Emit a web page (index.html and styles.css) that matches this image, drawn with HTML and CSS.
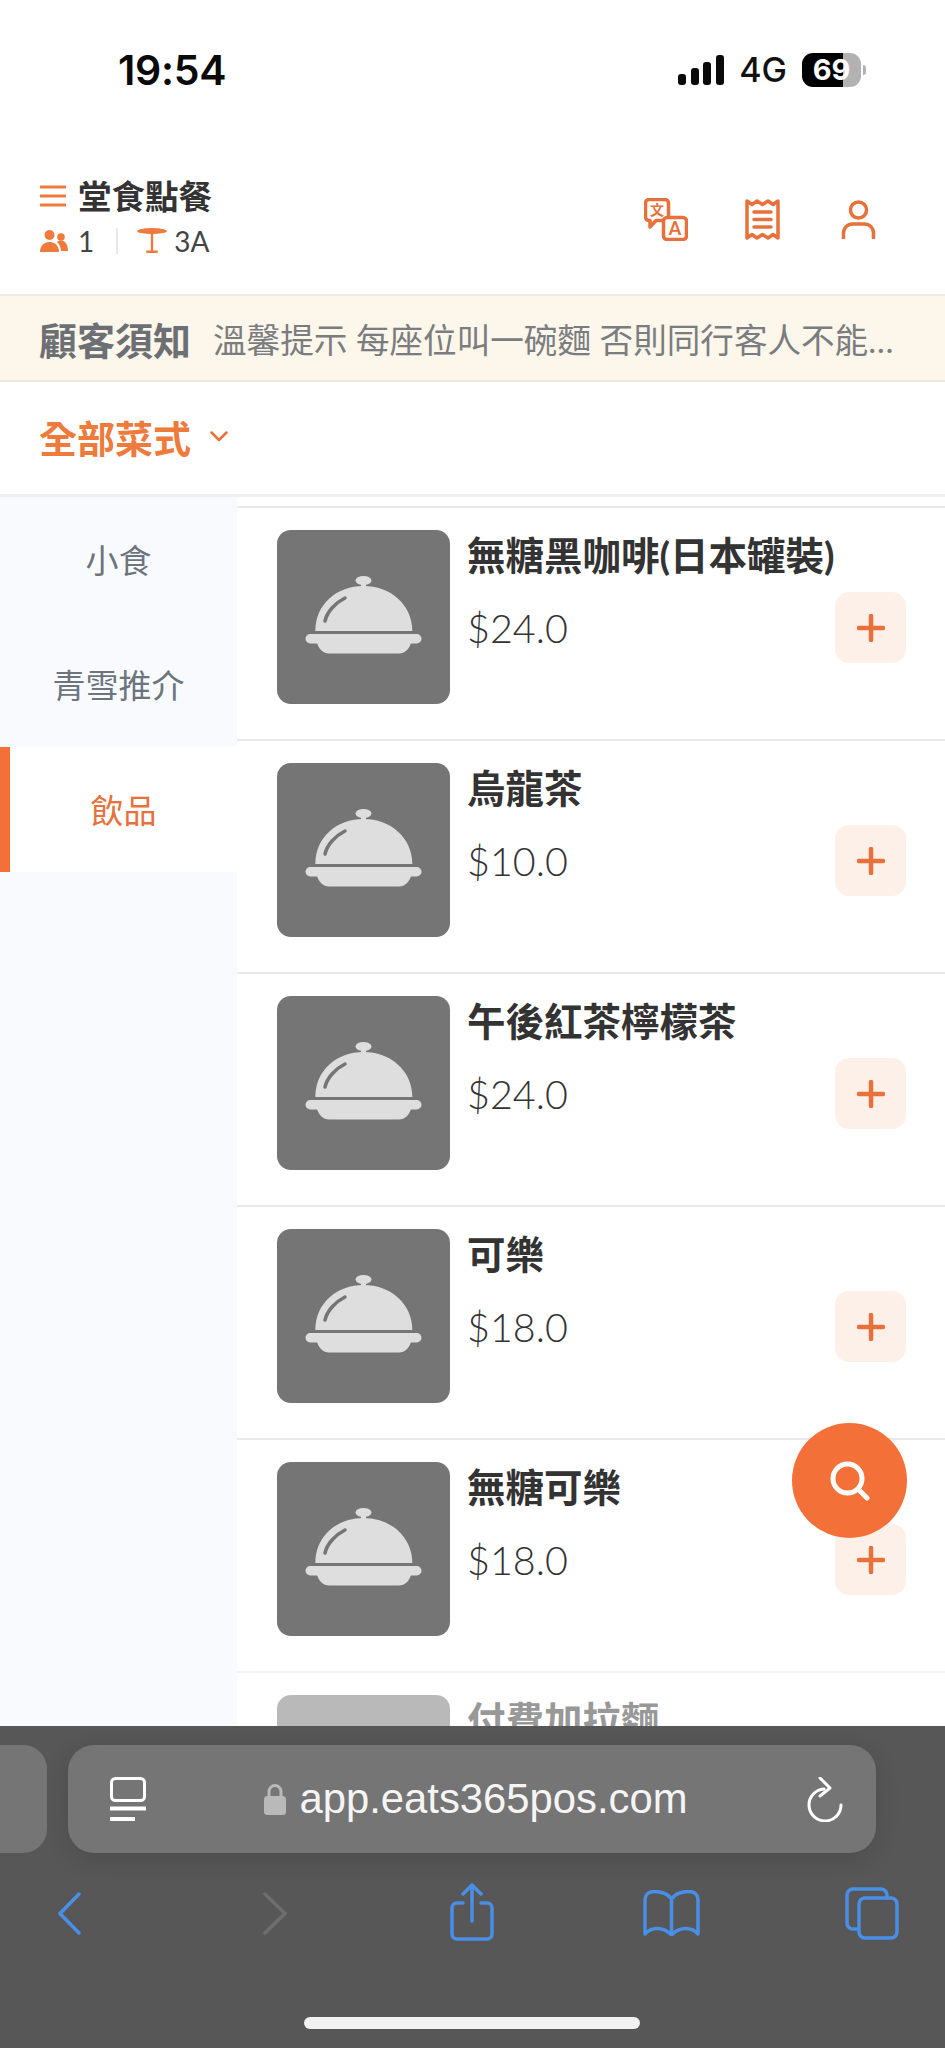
FILE: index.html
```html
<!DOCTYPE html>
<html lang="zh-Hant">
<head>
<meta charset="utf-8">
<title>堂食點餐</title>
<link rel="stylesheet" href="styles.css">
</head>
<body>
<div class="phone">
  <div class="status">
    <span class="time">19:54</span>
    <div class="status-right">
      <svg class="signal" width="46" height="30" viewBox="0 0 46 30"><rect x="0" y="19" width="8" height="11" rx="3"/><rect x="13" y="13" width="8" height="17" rx="3"/><rect x="25" y="7" width="8" height="23" rx="3"/><rect x="38" y="0" width="8" height="30" rx="3"/></svg>
      <span class="net">4G</span>
      <div class="battery">69</div>
      <span class="battery-tip"></span>
    </div>
  </div>

  <header class="head">
    <div class="head-left">
      <div class="title-row">
        <svg class="burger" width="26" height="22" viewBox="0 0 26 22"><path d="M1 2h24M1 11h24M1 20h24"/></svg>
        <span class="title">堂食點餐</span>
      </div>
      <div class="meta-row">
        <svg class="ico-people" width="28" height="22" viewBox="0 0 28 22"><circle cx="9.500" cy="5" r="5"/><circle cx="21" cy="7" r="3.800"/><path d="M0 22c0-6 4-10 9.500-10S19 16 19 22z"/><path d="M17 12c1-1 2.500-1.500 4-1.500 4 0 7 4 7 9.500v1h-7c0-3-1.500-7-4-9z"/></svg>
        <span class="meta-num">1</span>
        <span class="meta-div"></span>
        <svg class="ico-table" width="30" height="26" viewBox="0 0 30 26"><ellipse cx="15" cy="3" rx="15" ry="3"/><rect x="13.800" y="5" width="2.400" height="18"/><rect x="9" y="22.500" width="12" height="2.600" rx="1.300"/></svg>
        <span class="meta-num">3A</span>
      </div>
    </div>
    <div class="head-icons">
      <svg class="ico-line ico-translate" width="44" height="43" viewBox="0 0 44 43"><path d="M5 1.500h16a3.500 3.500 0 0 1 3.500 3.500v14a3.500 3.500 0 0 1-3.500 3.500H12L6 29v-6.500H5A3.500 3.500 0 0 1 1.500 19V5A3.500 3.500 0 0 1 5 1.500z"/><rect class="fill-white" x="19.500" y="19.500" width="23" height="22" rx="3.500"/><text class="ico-zh" x="13" y="17">文</text><text class="ico-a" x="31" y="37">A</text></svg>
      <svg class="ico-line ico-receipt" width="35" height="41" viewBox="0 0 35 41"><path d="M2 2l5 3.500 5-3.500 5.500 3.500L23 2l5 3.500L33 2v37l-5-3.500-5 3.500-5.500-3.500L12 39l-5-3.500L2 39z"/><path d="M9 13h17M9 20.500h17M9 28h17"/></svg>
      <svg class="ico-line ico-person" width="35" height="39" viewBox="0 0 35 39"><circle cx="17.500" cy="10" r="8"/><path d="M2.500 38v-5a9 9 0 0 1 9-9h12a9 9 0 0 1 9 9v5"/></svg>
    </div>
  </header>

  <div class="notice">
    <span class="notice-label">顧客須知</span>
    <span class="notice-text">溫馨提示 每座位叫一碗麵 否則同行客人不能共享食物，敬請見諒</span>
  </div>

  <div class="category">
    <span class="category-name">全部菜式</span>
    <svg class="chev" width="18" height="11" viewBox="0 0 18 11"><path d="M1.500 1.500L9 9l7.500-7.500"/></svg>
  </div>

  <main class="body">
    <nav class="side">
      <div class="side-item">小食</div>
      <div class="side-item">青雪推介</div>
      <div class="side-item is-active">飲品</div>
    </nav>
    <section class="list">
      <article class="row">
        <div class="thumb"><svg class="dish" viewBox="0 0 173 174"><use href="#dish"/></svg></div>
        <div class="info"><h3 class="name">無糖黑咖啡(日本罐裝)</h3><div class="line"><span class="price">$24.0</span><button class="add"><svg width="28" height="28" viewBox="0 0 28 28"><path d="M14 2v24M2 14h24"/></svg></button></div></div>
      </article>
      <article class="row">
        <div class="thumb"><svg class="dish" viewBox="0 0 173 174"><use href="#dish"/></svg></div>
        <div class="info"><h3 class="name">烏龍茶</h3><div class="line"><span class="price">$10.0</span><button class="add"><svg width="28" height="28" viewBox="0 0 28 28"><path d="M14 2v24M2 14h24"/></svg></button></div></div>
      </article>
      <article class="row">
        <div class="thumb"><svg class="dish" viewBox="0 0 173 174"><use href="#dish"/></svg></div>
        <div class="info"><h3 class="name">午後紅茶檸檬茶</h3><div class="line"><span class="price">$24.0</span><button class="add"><svg width="28" height="28" viewBox="0 0 28 28"><path d="M14 2v24M2 14h24"/></svg></button></div></div>
      </article>
      <article class="row">
        <div class="thumb"><svg class="dish" viewBox="0 0 173 174"><use href="#dish"/></svg></div>
        <div class="info"><h3 class="name">可樂</h3><div class="line"><span class="price">$18.0</span><button class="add"><svg width="28" height="28" viewBox="0 0 28 28"><path d="M14 2v24M2 14h24"/></svg></button></div></div>
      </article>
      <article class="row">
        <div class="thumb"><svg class="dish" viewBox="0 0 173 174"><use href="#dish"/></svg></div>
        <div class="info"><h3 class="name">無糖可樂</h3><div class="line"><span class="price">$18.0</span><button class="add"><svg width="28" height="28" viewBox="0 0 28 28"><path d="M14 2v24M2 14h24"/></svg></button></div></div>
      </article>
      <article class="row is-faded">
        <div class="thumb"></div>
        <div class="info"><h3 class="name">付費加拉麵</h3></div>
      </article>
    </section>
    <button class="fab"><svg width="40" height="40" viewBox="0 0 40 40"><circle cx="17.500" cy="17.500" r="14.500"/><path d="M28 28l9 9"/></svg></button>
  </main>

  <footer class="toolbar">
    <div class="url-row">
      <div class="tab-stub"></div>
      <div class="url-pill">
        <svg class="ico-page" width="36" height="44" viewBox="0 0 36 44"><rect x="1.500" y="1.500" width="33" height="22" rx="4"/><path class="thick" d="M0 31.500h36M0 42h25"/></svg>
        <div class="url-center">
          <svg class="ico-lock" width="22" height="32" viewBox="0 0 22 32"><path d="M5 14V8.500a6 6 0 0 1 12 0V14" fill="none" stroke="#b9b9b9" stroke-width="3"/><rect x="0" y="13" width="22" height="19" rx="3.500" fill="#b9b9b9"/></svg>
          <span class="url">app.eats365pos.com</span>
        </div>
        <svg class="ico-reload" width="37" height="45" viewBox="0 0 37 45"><path d="M18 12A16 16 0 1 0 35 28"/><path d="M14 1l10 10-10 8"/></svg>
      </div>
    </div>
    <div class="nav-row">
      <svg class="nav-ico ico-back" width="24" height="43" viewBox="0 0 24 43"><path d="M22 2L3 21.500 22 41"/></svg>
      <svg class="nav-ico nav-off ico-forward" width="24" height="43" viewBox="0 0 24 43"><path d="M2 2l20 19.500L2 41"/></svg>
      <svg class="nav-ico ico-share" width="44" height="58" viewBox="0 0 44 58"><path d="M13 20H7a5 5 0 0 0-5 5v26a5 5 0 0 0 5 5h30a5 5 0 0 0 5-5V25a5 5 0 0 0-5-5h-6"/><path d="M22 38V2M13 11l9-9 9 9"/></svg>
      <svg class="nav-ico ico-book" width="57" height="46" viewBox="0 0 57 46"><path d="M28.500 9C25 4 18 1.500 11 1.500 5 1.500 2 5 2 10v34c6-7 18-8 26.500 1C37 36 49 37 55 44V10c0-5-3-8.500-9-8.500C39 1.500 32 4 28.500 9zM28.500 9v36"/></svg>
      <svg class="nav-ico ico-tabs" width="54" height="53" viewBox="0 0 54 53"><path d="M42 11V8a6 6 0 0 0-6-6H8a6 6 0 0 0-6 6v28a6 6 0 0 0 6 6h5"/><rect x="14" y="11" width="38" height="40" rx="6"/></svg>
    </div>
    <div class="home-bar"></div>
  </footer>
</div>

<svg class="defs" width="0" height="0">
  <symbol id="dish" viewBox="0 0 173 174">
    <ellipse cx="86.500" cy="50.500" rx="8" ry="4.500" fill="#dedede"/>
    <rect x="84" y="52" width="5" height="6" fill="#dedede"/>
    <path d="M38.300 101C38.300 74 60 56 86.500 56S135 74 135.300 101z" fill="#dedede"/>
    <path d="M68 68C58 73 50 82 48 91" fill="none" stroke="#757575" stroke-width="3.500" stroke-linecap="round"/>
    <rect x="28.500" y="104" width="116" height="9.500" rx="4.700" fill="#dedede"/>
    <path d="M40 113h94c-2 6-6 10.500-12 10.500H52c-6 0-10-4.500-12-10.500z" fill="#dedede"/>
  </symbol>
</svg>
</body>
</html>
```
FILE: styles.css
```css
* { box-sizing: border-box; }
html, body { margin: 0; padding: 0; background: #fff; }
body { font-family: "Lato", "Noto Sans CJK TC", sans-serif; color: #333; }
.defs { position: absolute; }
.phone { width: 945px; height: 2048px; display: flex; flex-direction: column; overflow: hidden; }

.status { height: 172px; display: flex; justify-content: space-between; align-items: flex-start; padding: 47px 78px 0 118px; flex: none; }
.time { font-family: "Inter", sans-serif; font-weight: 600; font-size: 41px; line-height: 46px; color: #0a0a0a; letter-spacing: -0.3px; }
.status-right { display: flex; align-items: center; margin-top: 6px; margin-right: 1px; }
.signal { fill: #0a0a0a; margin-right: 15px; }
.net { font-family: "Inter", sans-serif; font-size: 34px; line-height: 34px; font-weight: 500; color: #111; margin-right: 15px; }
.battery { width: 59px; height: 34px; border-radius: 11px; background: linear-gradient(90deg, #000 41px, #b2b2b2 41px); color: #fff; font-family: "Inter", sans-serif; font-weight: 700; font-size: 29px; line-height: 34px; text-align: center; }
.battery-tip { width: 3px; height: 10px; margin-left: 2px; background: #b2b2b2; border-radius: 0 3px 3px 0; }

.head { height: 122px; flex: none; display: flex; justify-content: space-between; align-items: flex-start; padding: 4px 69px 0 40px; }
.title-row { display: flex; align-items: center; gap: 12px; height: 40px; }
.burger path { fill: none; stroke: #ee7a3c; stroke-width: 3; stroke-linecap: round; }
.title { font-size: 33.500px; line-height: 40px; font-weight: 700; color: #333; }
.meta-row { display: flex; align-items: center; margin-top: 11px; height: 28px; }
.ico-people, .ico-table { fill: #ee7a3c; flex: none; }
.meta-num { font-size: 28px; line-height: 28px; color: #444; margin-left: 10px; }
.meta-div { width: 2px; height: 26px; background: #e8e8e8; margin: 0 19px 0 22px; }
.ico-table + .meta-num { margin-left: 7px; }
.head-icons { display: flex; align-items: center; margin-top: 22px; }
.ico-line { fill: none; stroke: #e8703a; stroke-width: 3.500; stroke-linecap: round; stroke-linejoin: round; flex: none; }
.fill-white { fill: #fff; }
.ico-zh { font-size: 14px; font-weight: 700; fill: #e8703a; stroke: none; text-anchor: middle; }
.ico-a { font-size: 18px; font-weight: 700; fill: #e8703a; stroke: none; text-anchor: middle; font-family: "Lato", sans-serif; }
.ico-receipt { margin-left: 57px; }
.ico-person { margin-left: 61px; }

.notice { height: 88px; flex: none; display: flex; align-items: center; gap: 22px; padding: 0 36px 0 39px; background: #fdf6ea; border-top: 2px solid #eeeae2; border-bottom: 2px solid #ebe5da; }
.notice-label { font-size: 38px; font-weight: 700; color: #6c7074; white-space: nowrap; flex: none; }
.notice-text { font-size: 33.600px; color: #7a7d80; white-space: nowrap; overflow: hidden; text-overflow: ellipsis; min-width: 0; }

.category { height: 115px; flex: none; display: flex; align-items: center; gap: 19px; padding: 0 39px 4px; border-bottom: 3px solid #eeeeee; }
.category-name { font-size: 38px; font-weight: 700; color: #ee7a3c; }
.chev path { fill: none; stroke: #e8703a; stroke-width: 2.500; stroke-linecap: round; stroke-linejoin: round; }

.body { flex: 1; min-height: 0; display: flex; position: relative; overflow: hidden; }
.side { width: 237px; flex: none; background: #f9fafe; display: flex; flex-direction: column; }
.side-item { height: 125px; display: flex; align-items: center; justify-content: center; font-size: 33px; color: #6c757d; padding-bottom: 1px; }
.side-item.is-active { background: #fff; color: #e8703a; border-left: 10px solid #f37138; }

.list { flex: 1; min-width: 0; padding-top: 9px; }
.row { height: 233px; display: flex; gap: 17px; padding: 22px 39px 0 40px; border-top: 2px solid #e9e9e9; }
.thumb { width: 173px; height: 174px; flex: none; border-radius: 14px; background: #757575; }
.dish { display: block; width: 173px; height: 174px; }
.info { flex: 1; min-width: 0; }
.name { margin: 0; font-size: 38.500px; line-height: 50px; font-weight: 700; color: #333; white-space: nowrap; }
.line { display: flex; justify-content: space-between; align-items: center; margin-top: 12px; }
.price { font-size: 39.500px; line-height: 50px; color: #333; font-weight: 300; }
.add { width: 71px; height: 71px; border: 0; padding: 0; border-radius: 14px; background: #fdf0e9; display: flex; align-items: center; justify-content: center; }
.add path { fill: none; stroke: #e8703a; stroke-width: 4.500; stroke-linecap: round; }
.is-faded { opacity: .5; }

.fab { position: absolute; left: 792px; top: 926px; width: 115px; height: 115px; border: 0; padding: 0; border-radius: 50%; background: #f37138; display: flex; align-items: center; justify-content: center; }
.fab circle, .fab path { fill: none; stroke: #fff; stroke-width: 5; stroke-linecap: round; }

.toolbar { height: 322px; flex: none; background: #575757; padding-top: 19px; }
.url-row { display: flex; gap: 21px; height: 108px; }
.tab-stub { width: 47px; background: #757575; border-radius: 0 24px 24px 0; }
.url-pill { width: 808px; background: #757575; border-radius: 26px; box-shadow: 0 6px 24px rgba(0, 0, 0, .12); display: flex; align-items: center; justify-content: space-between; padding: 0 33px 0 42px; }
.ico-page { fill: none; stroke: #fff; stroke-width: 3; }
.ico-page .thick { stroke-width: 4; }
.url-center { display: flex; align-items: center; gap: 13px; }
.url { font-family: "Liberation Sans", sans-serif; font-size: 41.800px; line-height: 50px; color: #f5f5f5; white-space: nowrap; }
.ico-reload { fill: none; stroke: #fff; stroke-width: 3; stroke-linecap: round; stroke-linejoin: round; }
.nav-row { height: 120px; display: flex; align-items: center; padding-left: 57px; }
.nav-ico { fill: none; stroke: #4a8fe7; stroke-width: 3.500; stroke-linecap: round; stroke-linejoin: round; flex: none; }
.nav-off { stroke: #6e6e6e; }
.ico-forward { margin-left: 182px; }
.ico-share { margin-left: 163px; margin-top: -2px; }
.ico-book { margin-left: 149px; }
.ico-tabs { margin-left: 145px; }
.home-bar { width: 336px; height: 12px; margin: 44px 0 0 304px; border-radius: 6px; background: #f2f2f2; }
```
